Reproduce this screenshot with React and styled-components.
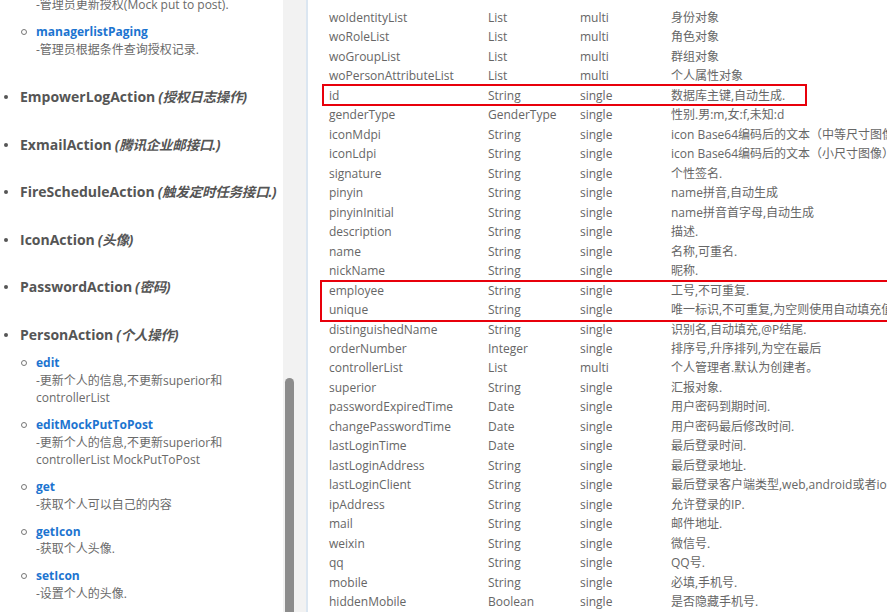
import React from 'react'
import styled, { createGlobalStyle } from 'styled-components'

// left: api doc tree (scrolled), right: field table of Person with marked rows

const GlobalStyle = createGlobalStyle`
  html, body { margin: 0; padding: 0; background: #fff; }
  body { font-family: "Open Sans", "Noto Sans CJK SC", sans-serif; }
`

const Page = styled.div`
  display: flex;
  width: 887px;
  height: 612px;
  overflow: hidden;
`

const Sidebar = styled.div`
  width: 283px;
  flex-shrink: 0;
  overflow: hidden;
  background: #fff;
`

const Track = styled.div`
  width: 23px;
  flex-shrink: 0;
  background: #f2f2f2;
  display: flex;
  flex-direction: column;
  justify-content: flex-end;
  padding-left: 2px;
  box-sizing: border-box;
`

const Thumb = styled.div`
  width: 9px;
  height: 234px;
  background: #8c8c8c;
  border-radius: 5px 5px 0 0;
`

const Divider = styled.div`
  width: 2px;
  flex-shrink: 0;
  background: #dbe6f1;
`

const Main = styled.div`
  flex: 1;
  position: relative;
  padding-top: 8px;
  overflow: hidden;
`

const Tree = styled.div`
  display: flex;
  flex-direction: column;
  gap: 27.5px;
  margin-top: -4px;
`

const TopItem = styled.div`
  display: grid;
  grid-template-columns: 20px 1fr;
  align-items: center;
  line-height: 20px;
  font-size: 14px;
  font-weight: 700;
  color: #555;
  white-space: nowrap;
`

const Dot = styled.span`
  width: 4px;
  height: 4px;
  margin-left: 4px;
  border-radius: 50%;
  background: #555;
`

const Note = styled.em`
  font-style: italic;
  font-weight: 700;
  font-size: 13.5px;
  margin-left: 3px;
  letter-spacing: -0.2px;
`

const SubList = styled.div`
  display: flex;
  flex-direction: column;
  gap: 9.5px;
  padding-left: 20px;
  margin-top: ${p => p.$top || 0}px;
  margin-bottom: ${p => p.$bottom || 0}px;
`

const SubItem = styled.div`
  display: grid;
  grid-template-columns: 16px 1fr;
  font-size: 12px;
  line-height: 17.5px;
`

const Ring = styled.span`
  width: 4px;
  height: 4px;
  margin: 6px 0 0 1px;
  border: 1.2px solid #777;
  border-radius: 50%;
`

const Link = styled.div`
  color: #1c74d0;
  font-weight: 700;
  grid-column: 2;
`

const Desc = styled.div`
  color: #6a6a6a;
  grid-column: 2;
`

const Table = styled.div`
  display: flex;
  flex-direction: column;
`

const Row = styled.div`
  display: grid;
  grid-template-columns: 159px 92px 91px auto;
  padding-left: 21px;
  line-height: 19.47px;
  font-size: 12px;
  color: #666;
  white-space: nowrap;
`

const Mark = styled.div`
  position: absolute;
  border: 2px solid #e8000b;
  box-sizing: border-box;
  pointer-events: none;
`

const before = [
  { desc: '-管理员更新授权(Mock put to post).' },
  { link: 'managerlistPaging', desc: '-管理员根据条件查询授权记录.' },
]

const actions = [
  ['EmpowerLogAction', '(授权日志操作)'],
  ['ExmailAction', '(腾讯企业邮接口.)'],
  ['FireScheduleAction', '(触发定时任务接口.)'],
  ['IconAction', '(头像)'],
  ['PasswordAction', '(密码)'],
]

const personOps = [
  { link: 'edit', desc: ['-更新个人的信息,不更新superior和', 'controllerList'] },
  { link: 'editMockPutToPost', desc: ['-更新个人的信息,不更新superior和', 'controllerList MockPutToPost'] },
  { link: 'get', desc: ['-获取个人可以自己的内容'] },
  { link: 'getIcon', desc: ['-获取个人头像.'] },
  { link: 'setIcon', desc: ['-设置个人的头像.'] },
]

const fields = [
  ['woIdentityList', 'List', 'multi', '身份对象'],
  ['woRoleList', 'List', 'multi', '角色对象'],
  ['woGroupList', 'List', 'multi', '群组对象'],
  ['woPersonAttributeList', 'List', 'multi', '个人属性对象'],
  ['id', 'String', 'single', '数据库主键,自动生成.'],
  ['genderType', 'GenderType', 'single', '性别.男:m,女:f,未知:d'],
  ['iconMdpi', 'String', 'single', 'icon Base64编码后的文本（中等尺寸图像）'],
  ['iconLdpi', 'String', 'single', 'icon Base64编码后的文本（小尺寸图像）'],
  ['signature', 'String', 'single', '个性签名.'],
  ['pinyin', 'String', 'single', 'name拼音,自动生成'],
  ['pinyinInitial', 'String', 'single', 'name拼音首字母,自动生成'],
  ['description', 'String', 'single', '描述.'],
  ['name', 'String', 'single', '名称,可重名.'],
  ['nickName', 'String', 'single', '昵称.'],
  ['employee', 'String', 'single', '工号,不可重复.'],
  ['unique', 'String', 'single', '唯一标识,不可重复,为空则使用自动填充值'],
  ['distinguishedName', 'String', 'single', '识别名,自动填充,@P结尾.'],
  ['orderNumber', 'Integer', 'single', '排序号,升序排列,为空在最后'],
  ['controllerList', 'List', 'multi', '个人管理者.默认为创建者。'],
  ['superior', 'String', 'single', '汇报对象.'],
  ['passwordExpiredTime', 'Date', 'single', '用户密码到期时间.'],
  ['changePasswordTime', 'Date', 'single', '用户密码最后修改时间.'],
  ['lastLoginTime', 'Date', 'single', '最后登录时间.'],
  ['lastLoginAddress', 'String', 'single', '最后登录地址.'],
  ['lastLoginClient', 'String', 'single', '最后登录客户端类型,web,android或者ios'],
  ['ipAddress', 'String', 'single', '允许登录的IP.'],
  ['mail', 'String', 'single', '邮件地址.'],
  ['weixin', 'String', 'single', '微信号.'],
  ['qq', 'String', 'single', 'QQ号.'],
  ['mobile', 'String', 'single', '必填,手机号.'],
  ['hiddenMobile', 'Boolean', 'single', '是否隐藏手机号.'],
]

const Ops = ({ items, top, bottom }) => (
  <SubList $top={top} $bottom={bottom}>
    {items.map((it, i) => (
      <SubItem key={i}>
        {it.link && <Ring />}
        {it.link && <Link>{it.link}</Link>}
        {[].concat(it.desc).map((d, j) => <Desc key={j}>{d}</Desc>)}
      </SubItem>
    ))}
  </SubList>
)

export default function App() {
  return (
    <Page>
      <GlobalStyle />
      <Sidebar>
        <Tree>
          <Ops items={before} bottom={1.5} />
          {actions.map(([name, note]) => (
            <TopItem key={name}>
              <Dot />
              <span>{name}<Note>{note}</Note></span>
            </TopItem>
          ))}
          <div>
            <TopItem>
              <Dot />
              <span>PersonAction<Note>(个人操作)</Note></span>
            </TopItem>
            <Ops items={personOps} top={9.5} />
          </div>
        </Tree>
      </Sidebar>
      <Track><Thumb /></Track>
      <Divider />
      <Main>
        <Table>
          {fields.map(f => (
            <Row key={f[0]}>
              {f.map((c, i) => <span key={i}>{c}</span>)}
            </Row>
          ))}
        </Table>
        <Mark style={{ left: 14, top: 84, width: 485, height: 22 }} />
        <Mark style={{ left: 12, top: 280, width: 620, height: 42 }} />
      </Main>
    </Page>
  )
}
